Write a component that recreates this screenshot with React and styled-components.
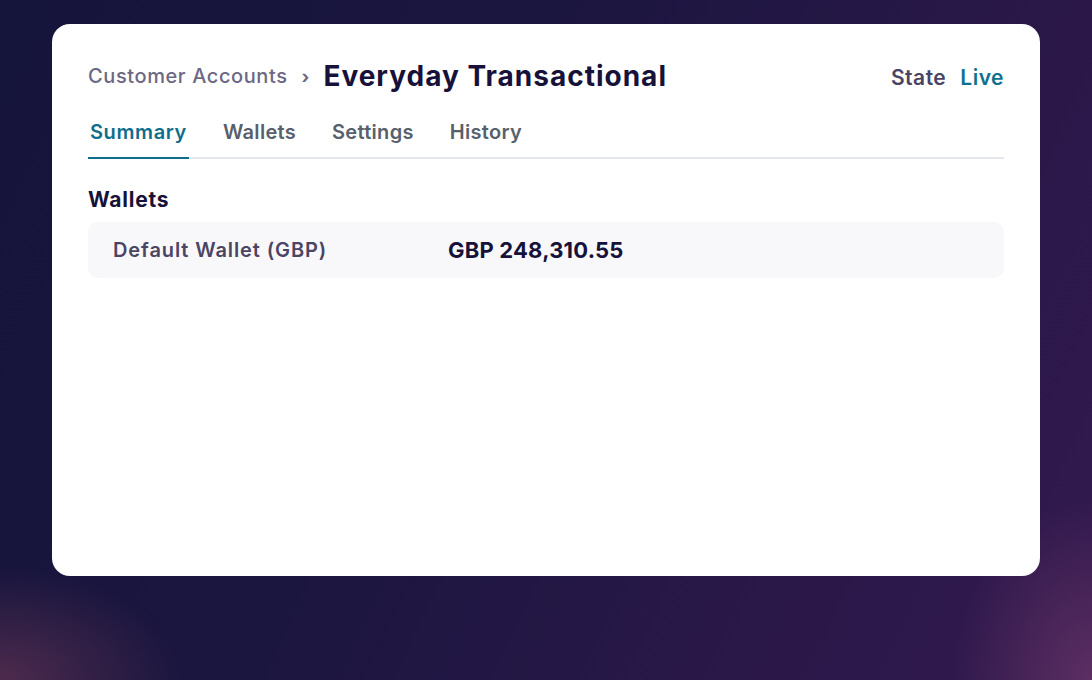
import React from "react";
import styled, { createGlobalStyle } from "styled-components";

const Global = createGlobalStyle`
  html, body { margin: 0; padding: 0; }
  body {
    width: 1092px; height: 680px; overflow: hidden;
    font-family: "Inter", "Noto Sans", sans-serif;
    background:
      radial-gradient(ellipse 260px 160px at 0% 100%, rgba(120,60,90,0.55), transparent 70%),
      radial-gradient(ellipse 200px 260px at 100% 100%, rgba(120,60,110,0.6), transparent 70%),
      linear-gradient(115deg, #15143a 0%, #1b1640 40%, #2a1848 75%, #32194f 100%);
  }
`;

const Page = styled.div`
  padding: 24px 52px 0 52px;
`;

const Card = styled.div`
  background: #fff;
  border-radius: 18px;
  height: 552px;
  box-sizing: border-box;
  padding: 30px 36px;
`;

const Header = styled.div`
  display: flex;
  align-items: center;
  justify-content: space-between;
  height: 44px;
`;

const Crumbs = styled.div`
  display: flex;
  align-items: center;
  gap: 14px;
`;

const Crumb = styled.span`
  font-size: 20px;
  font-weight: 500;
  letter-spacing: 0.6px;
  color: #6c6883;
`;

const Sep = styled.span`
  font-size: 18px;
  font-weight: 700;
  color: #6c6883;
`;

const Title = styled.h1`
  margin: 0;
  font-size: 28px;
  font-weight: 700;
  letter-spacing: 1px;
  color: #17123a;
`;

const StateBox = styled.div`
  display: flex;
  gap: 14px;
  padding-top: 3px;
  font-size: 21px;
  font-weight: 600;
  letter-spacing: 0.5px;
`;

const StateLabel = styled.span`color: #4a4464;`;
const StateValue = styled.span`color: #10718e;`;

const Tabs = styled.div`
  display: flex;
  border-bottom: 2px solid #e3e6ea;
  margin-top: 12px;
`;

const Tab = styled.div`
  padding: 10px 2px 13px;
  margin-right: 32px;
  font-size: 20px;
  line-height: 24px;
  font-weight: 600;
  letter-spacing: ${p => (p.$active ? "0.6px" : "0.3px")};
  color: ${p => (p.$active ? "#0f6e8c" : "#58606c")};
  border-bottom: 2px solid ${p => (p.$active ? "#0f6e8c" : "transparent")};
  margin-bottom: -2px;
`;

const Section = styled.h2`
  margin: 28px 0 10px;
  font-size: 21px;
  line-height: 25px;
  font-weight: 700;
  letter-spacing: 0.75px;
  color: #17123a;
`;

const Row = styled.div`
  display: grid;
  grid-template-columns: 335px 1fr;
  align-items: center;
  height: 56px;
  padding: 0 25px;
  background: #f8f8fb;
  border-radius: 10px;
`;

const Label = styled.span`
  font-size: 20px;
  font-weight: 600;
  letter-spacing: 0.9px;
  color: #4b4563;
`;

const Value = styled.span`
  font-size: 22px;
  font-weight: 700;
  letter-spacing: 0.2px;
  color: #17123a;
`;

export default function App() {
  return (
    <>
      <Global />
      <Page>
        <Card>
          <Header>
            <Crumbs>
              <Crumb>Customer Accounts</Crumb>
              <Sep>›</Sep>
              <Title>Everyday Transactional</Title>
            </Crumbs>
            <StateBox>
              <StateLabel>State</StateLabel>
              <StateValue>Live</StateValue>
            </StateBox>
          </Header>
          <Tabs>
            <Tab $active>Summary</Tab>
            <Tab>Wallets</Tab>
            <Tab>Settings</Tab>
            <Tab>History</Tab>
          </Tabs>
          <Section>Wallets</Section>
          <Row>
            <Label>Default Wallet (GBP)</Label>
            <Value>GBP 248,310.55</Value>
          </Row>
        </Card>
      </Page>
    </>
  );
}
